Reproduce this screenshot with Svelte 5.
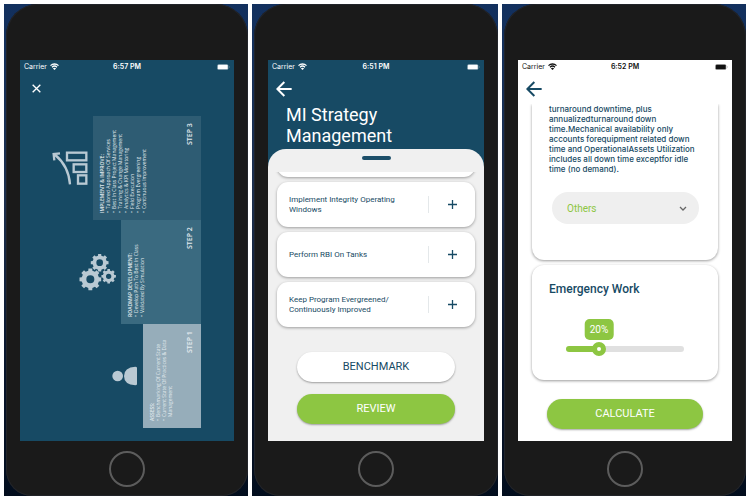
<script>
  const steps = [
    {
      id: 3,
      title: 'IMPLEMENT & IMPROVE:',
      items: [
        'Tailored Approach Of Services',
        'Best In Class Project Management',
        'Training & Change Management',
        'Analytics & KPI Monitoring',
        'Field Execution',
        'Program Evergreening',
        'Continuous Improvement'
      ]
    },
    {
      id: 2,
      title: 'ROADMAP DEVELOPMENT:',
      items: ['Develop Path To Best In Class', 'Validated By Simulation']
    },
    {
      id: 1,
      title: 'ASSESS:',
      items: ['Benchmarking Of Current State', 'Current State Of Practices & Data Management']
    }
  ];

  const strategies = [
    'Implement Integrity Operating Windows',
    'Perform RBI On Tanks',
    'Keep Program Evergreened/ Continuously Improved'
  ];

  const sliderMax = 80;
  let emergency = $state(20);
  let share = $derived(emergency / sliderMax);

  // Outline of a toothed wheel with a round hole, for an even-odd fill.
  function gear(cx, cy, r, teeth, hole) {
    const inner = r * 0.8;
    const step = (Math.PI * 2) / teeth;
    const at = (rad, a) => `${(cx + rad * Math.cos(a)).toFixed(1)} ${(cy + rad * Math.sin(a)).toFixed(1)}`;
    let d = '';
    for (let i = 0; i < teeth; i++) {
      const a = i * step - Math.PI / 2;
      d += `${i ? 'L' : 'M'}${at(inner, a - step * 0.3)}L${at(r, a - step * 0.22)}L${at(r, a + step * 0.22)}L${at(inner, a + step * 0.3)}`;
    }
    return `${d}ZM${cx - hole} ${cy}a${hole} ${hole} 0 1 0 ${hole * 2} 0a${hole} ${hole} 0 1 0 ${-hole * 2} 0Z`;
  }

  const gears = [gear(34, 76, 33, 8, 12), gear(62, 26, 27, 8, 10), gear(89, 67, 22, 8, 8)];
</script>

{#snippet statusBar(time)}
  <div class="status">
    <span class="carrier">
      Carrier
      <svg width="9" height="7" viewBox="0 0 18 14" aria-hidden="true">
        <path d="M1 5.2a11.5 11.5 0 0 1 16 0M4 8.4a7.4 7.4 0 0 1 10 0" fill="none" stroke="currentColor" stroke-width="2.6" />
        <path d="M9 14 5.8 10.8a4.6 4.6 0 0 1 6.4 0Z" fill="currentColor" />
      </svg>
    </span>
    <span class="time">{time}</span>
    <svg class="battery" width="13" height="6" viewBox="0 0 26 12" aria-hidden="true">
      <rect x="0.5" y="0.5" width="22" height="11" rx="3" fill="currentColor" fill-opacity="0.6" />
      <rect x="2" y="2" width="19" height="8" rx="1" fill="currentColor" />
      <path d="M24 4q2 2 0 4Z" fill="currentColor" opacity="0.6" />
    </svg>
  </div>
{/snippet}

{#snippet backArrow()}
  <button class="icon-btn" aria-label="Back">
    <svg width="16" height="16" viewBox="0 0 48 48" aria-hidden="true">
      <path d="M47 24H5M25 3 4 24l21 21" fill="none" stroke="currentColor" stroke-width="6" />
    </svg>
  </button>
{/snippet}

{#snippet stepIcon(id)}
  {#if id === 3}
    <svg width="36" height="34" viewBox="38 122 108 102" aria-hidden="true">
      <g fill="none" stroke="currentColor" stroke-width="7">
        <rect x="116" y="195" width="25" height="25" />
        <rect x="103" y="162" width="38" height="23" />
        <rect x="83" y="127" width="58" height="23" />
        <path d="M92 222Q88 168 48 134M45 150 43 131 62 129" />
      </g>
    </svg>
  {:else if id === 2}
    <svg width="37" height="37" viewBox="0 0 111 111" aria-hidden="true">
      {#each gears as d}
        <path {d} fill="currentColor" fill-rule="evenodd" />
      {/each}
    </svg>
  {:else}
    <svg width="26" height="20" viewBox="68 139 78 60" aria-hidden="true">
      <circle cx="85" cy="169" r="16" fill="currentColor" />
      <path d="M143 145v48q0 4-5 4-34-2-34-28t34-28q5 0 5 4Z" fill="currentColor" />
    </svg>
  {/if}
{/snippet}

<main>
  <section class="panel">
    <div class="phone">
      <div class="screen dark">
        {@render statusBar('6:57 PM')}
        <nav>
          <button class="icon-btn close" aria-label="Close">
            <svg width="9" height="9" viewBox="0 0 27 27" aria-hidden="true">
              <path d="M2 2 25 25M25 2 2 25" fill="none" stroke="currentColor" stroke-width="4" />
            </svg>
          </button>
        </nav>
        <div class="steps">
          {#each steps as step}
            <div class="step">
              {@render stepIcon(step.id)}
              <article class="step-card s{step.id}">
                <div class="step-text">
                  <h2>{step.title}</h2>
                  <ul>
                    {#each step.items as item}<li>{item}</li>{/each}
                  </ul>
                </div>
                <strong>STEP {step.id}</strong>
              </article>
            </div>
          {/each}
        </div>
      </div>
      <button class="home" aria-label="Home"></button>
    </div>
  </section>

  <section class="panel">
    <div class="phone">
      <div class="screen dark">
        {@render statusBar('6:51 PM')}
        <nav>{@render backArrow()}</nav>
        <h1>MI Strategy Management</h1>
        <div class="sheet">
          <div class="handle"></div>
          <ul class="list">
            <li class="row"></li>
            {#each strategies as name}
              <li class="row">
                <span>{name}</span>
                <button class="add" aria-label="Add {name}">
                  <svg width="9" height="9" viewBox="0 0 9 9" aria-hidden="true">
                    <path d="M4.5 0v9M0 4.5h9" stroke="currentColor" stroke-width="1.3" />
                  </svg>
                </button>
              </li>
            {/each}
          </ul>
          <div class="actions">
            <button class="pill white">BENCHMARK</button>
            <button class="pill green">REVIEW</button>
          </div>
        </div>
      </div>
      <button class="home" aria-label="Home"></button>
    </div>
  </section>

  <section class="panel">
    <div class="phone">
      <div class="screen light">
        {@render statusBar('6:52 PM')}
        <nav>{@render backArrow()}</nav>
        <div class="scroll">
          <article class="card first">
            <p>
              turnaround downtime, plus annualizedturnaround down time.Mechanical availability only accounts
              forequipment related down time and OperationalAssets Utilization includes all down time exceptfor
              idle time (no demand).
            </p>
            <div class="select">
              <select aria-label="Category">
                <option>Others</option>
              </select>
              <svg width="8" height="5" viewBox="0 0 8 5" aria-hidden="true">
                <path d="M1 1l3 3 3-3" fill="none" stroke="currentColor" stroke-width="1.3" />
              </svg>
            </div>
          </article>
          <article class="card second">
            <label for="emergency">Emergency Work</label>
            <div class="slider" style="--share: {share}">
              <output for="emergency">{emergency}%</output>
              <input id="emergency" type="range" min="0" max={sliderMax} bind:value={emergency} />
            </div>
          </article>
        </div>
        <div class="actions">
          <button class="pill green">CALCULATE</button>
        </div>
      </div>
      <button class="home" aria-label="Home"></button>
    </div>
  </section>
</main>

<style>
  :global(body) {
    margin: 0;
    background: #fff;
  }
  * {
    box-sizing: border-box;
  }
  main {
    display: grid;
    grid-template-columns: 244fr 246fr 244fr;
    gap: 4px;
    padding: 4px;
    height: 100vh;
    min-height: 500px;
    font-family: Roboto, 'Liberation Sans', sans-serif;
  }
  h1,
  h2,
  p,
  ul {
    margin: 0;
    padding: 0;
  }
  ul {
    list-style: none;
  }
  button {
    font: inherit;
    border: 0;
    padding: 0;
    background: none;
    color: inherit;
    cursor: pointer;
  }
  svg {
    display: block;
    flex: none;
  }
  .panel {
    display: flex;
    min-width: 0;
    min-height: 0;
    padding-left: 2px;
    background: linear-gradient(#12305e, #1d2f4c 40%, #07142a 75%, #020d1d);
  }
  .phone {
    flex: 1;
    min-width: 0;
    display: flex;
    flex-direction: column;
    align-items: center;
    padding: 56px 14px 9px;
    background: #1a1a1a;
    border-radius: 32px 32px 26px 26px;
    box-shadow: inset 0 0 0 1px #222429;
  }
  .screen {
    flex: 1;
    align-self: stretch;
    min-height: 0;
    display: flex;
    flex-direction: column;
    overflow: hidden;
  }
  .home {
    flex: none;
    width: 36px;
    height: 36px;
    margin-top: 10px;
    border: 2px solid #5c5c5c;
    border-radius: 50%;
  }
  .dark {
    background: #174a64;
    color: #fff;
  }
  .light {
    background: #fff;
    color: #174a64;
  }

  .status {
    display: grid;
    grid-template-columns: 1fr auto 1fr;
    align-items: center;
    height: 13px;
    padding: 0 4px;
    font-family: Inter, sans-serif;
    font-size: 7px;
    line-height: 13px;
  }
  .light .status {
    color: #111;
  }
  .carrier {
    display: flex;
    align-items: center;
    gap: 3px;
  }
  .time {
    font-weight: 600;
  }
  .battery {
    justify-self: end;
  }
  nav {
    display: flex;
    align-items: center;
    height: 31px;
    padding: 0 8px;
  }
  .light .icon-btn {
    color: #174a64;
  }
  .close {
    padding-left: 4px;
  }

  .steps {
    flex: 1;
    min-height: 0;
    display: grid;
    grid-template-rows: repeat(3, minmax(0, 1fr));
    padding: 12px 33px 13px 0;
    font-family: 'Open Sans', 'Noto Sans', sans-serif;
  }
  .step {
    min-height: 0;
    display: flex;
    align-items: center;
    justify-content: flex-end;
    gap: 5px;
    color: #b9c9d3;
  }
  .step-card {
    height: 100%;
    display: flex;
    flex-direction: column;
    justify-content: space-between;
    writing-mode: vertical-rl;
    transform: rotate(180deg);
    padding: 7px 6px;
    color: #e3ebef;
  }
  .s3 {
    width: 108px;
    background: #2e5c73;
  }
  .s2 {
    width: 80px;
    background: #3a6a80;
  }
  .s1 {
    width: 58px;
    background: #96adba;
  }
  .step-text {
    font-size: 5px;
    line-height: 6px;
  }
  h2 {
    font-size: 5px;
    font-weight: 600;
  }
  .step-text li {
    display: flex;
    flex-direction: row;
  }
  .step-text li::before {
    content: '•';
    margin-inline-end: 2px;
  }
  .step-card strong {
    align-self: flex-end;
    font-size: 7px;
    line-height: 10px;
    font-weight: 600;
  }

  h1 {
    padding: 0 18px;
    font-size: 18px;
    line-height: 21px;
    font-weight: 400;
  }
  .sheet {
    flex: 1;
    min-height: 0;
    display: flex;
    flex-direction: column;
    margin-top: 3px;
    padding-top: 7px;
    border-radius: 18px 18px 0 0;
    background: #f0f0f0;
    color: #174a64;
  }
  .handle {
    flex: none;
    width: 29px;
    height: 4px;
    margin: 0 auto 12px;
    border-radius: 2px;
    background: #1d4f69;
  }
  .list {
    flex: 1;
    min-height: 0;
    display: flex;
    flex-direction: column;
    justify-content: flex-end;
    gap: 5px;
    padding: 0 9px 5px;
    overflow: hidden;
  }
  .row {
    flex: none;
    display: flex;
    align-items: center;
    height: 45px;
    padding-left: 12px;
    border-radius: 11px;
    background: #fff;
    box-shadow: 0 1px 3px rgb(0 0 0 / 0.35);
    font-size: 8px;
    line-height: 10px;
  }
  .row span {
    flex: 1;
    padding-right: 20px;
  }
  .add {
    display: grid;
    place-items: center;
    width: 47px;
    height: 17px;
    border-left: 1px solid #e4e8ea;
  }
  .actions {
    flex: none;
    display: flex;
    flex-direction: column;
    gap: 12px;
    padding: 20px 29px 17px;
  }
  .pill {
    height: 30px;
    border-radius: 15px;
    font-size: 11px;
    line-height: 30px;
    box-shadow: 0 1px 2px rgb(0 0 0 / 0.35);
  }
  .white {
    background: #fff;
    color: #174a64;
  }
  .green {
    background: #8dc642;
    color: #fff;
  }

  .scroll {
    flex: 1;
    min-height: 0;
    display: flex;
    flex-direction: column;
    gap: 5px;
    padding: 0 14px;
    overflow: hidden;
  }
  .card {
    flex: none;
    border-radius: 12px;
    box-shadow: 0 1px 3px rgb(0 0 0 / 0.4);
  }
  .first {
    padding: 0 17px 36px;
    border-radius: 0 0 12px 12px;
  }
  .first p {
    font-family: Inter, Roboto, sans-serif;
    font-size: 8px;
    line-height: 10px;
    font-weight: 500;
  }
  .select {
    display: flex;
    align-items: center;
    margin: 18px 2px 0 3px;
    padding-right: 12px;
    border-radius: 16px;
    background: #efefef;
    color: #666;
  }
  select {
    flex: 1;
    height: 32px;
    padding: 0 15px;
    border: 0;
    appearance: none;
    background: none;
    color: #8dc642;
    font: 400 10px Roboto, sans-serif;
  }
  .second {
    padding: 15px 17px 24px;
  }
  label {
    display: block;
    font-size: 12px;
    line-height: 18px;
    font-weight: 500;
  }
  .slider {
    position: relative;
    margin: 21px 17px 0;
    padding-top: 23px;
  }
  output {
    position: absolute;
    top: 0;
    left: calc(7px + (100% - 14px) * var(--share));
    transform: translateX(-50%);
    padding: 0 5px;
    border-radius: 5px;
    background: #8dc642;
    color: #fff;
    font-size: 10px;
    line-height: 21px;
  }
  input {
    --stop: calc(7px + (100% - 14px) * var(--share));
    display: block;
    width: 100%;
    height: 14px;
    margin: 0;
    appearance: none;
    background: none;
  }
  input::-webkit-slider-runnable-track {
    height: 6px;
    border-radius: 3px;
    background: linear-gradient(90deg, #8dc642 var(--stop), #e0e0e0 var(--stop));
  }
  input::-webkit-slider-thumb {
    appearance: none;
    width: 14px;
    height: 14px;
    margin-top: -4px;
    border: 5px solid #8dc642;
    border-radius: 50%;
    background: #fff;
  }
  .light .actions {
    padding: 14px 29px 12px;
  }
</style>
